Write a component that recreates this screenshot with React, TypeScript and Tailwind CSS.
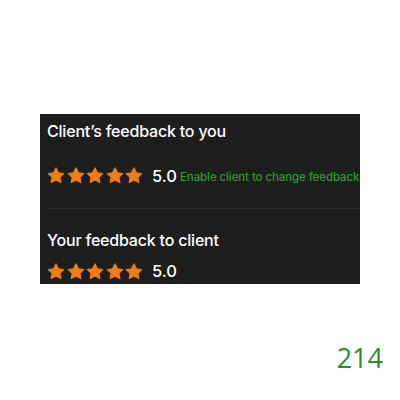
import React from "react";

const ORANGE = "#ee7d14";

function Star() {
  return (
    <svg width="18" height="17" viewBox="0 0 24 23" className="shrink-0">
      <path
        d="M12 1.2l3.2 6.6 7.2 1-5.2 5.1 1.3 7.2L12 17.7l-6.5 3.4 1.3-7.2L1.6 8.8l7.2-1z"
        fill={ORANGE}
        stroke={ORANGE}
        strokeWidth="1.6"
        strokeLinejoin="round"
      />
    </svg>
  );
}

function Stars() {
  return (
    <div className="flex items-center gap-[1.5px]">
      {[0, 1, 2, 3, 4].map((i) => (
        <Star key={i} />
      ))}
    </div>
  );
}

const App: React.FC = () => {
  return (
    <div className="w-[400px] h-[400px] bg-white font-['Inter',sans-serif] overflow-hidden">
      <div className="pt-[114px] pl-[40px]">
        <div className="w-[320px] h-[170px] bg-[#1e1e1e] overflow-hidden">
          <div className="px-[7px] pt-[7px]">
            <h2 className="text-[16px] leading-[20px] font-medium tracking-[-0.2px] text-white">
              Client’s feedback to you
            </h2>
            <div className="mt-[24px] flex items-center whitespace-nowrap">
              <Stars />
              <span className="ml-[9px] text-[16.5px] leading-[20px] font-medium text-white">5.0</span>
              <span className="ml-[3px] mt-[4px] text-[11.5px] font-medium tracking-[-0.1px] text-[#2d9a2a]">
                Enable client to change feedback
              </span>
            </div>
          </div>
          <div className="ml-[7px] mt-[22px] h-px bg-[#2c2c2c]" />
          <div className="px-[7px] pt-[21px]">
            <h2 className="text-[16px] leading-[20px] font-medium tracking-[-0.2px] text-white">
              Your feedback to client
            </h2>
            <div className="mt-[11px] flex items-center">
              <Stars />
              <span className="ml-[9px] text-[16.5px] leading-[20px] font-medium text-white">5.0</span>
            </div>
          </div>
        </div>
      </div>
      <div className="mt-[59px] pr-[17px] text-right font-['Open_Sans',sans-serif] text-[27px] leading-[30px] text-[#2e8b2e]">
        214
      </div>
    </div>
  );
};

export default App;
